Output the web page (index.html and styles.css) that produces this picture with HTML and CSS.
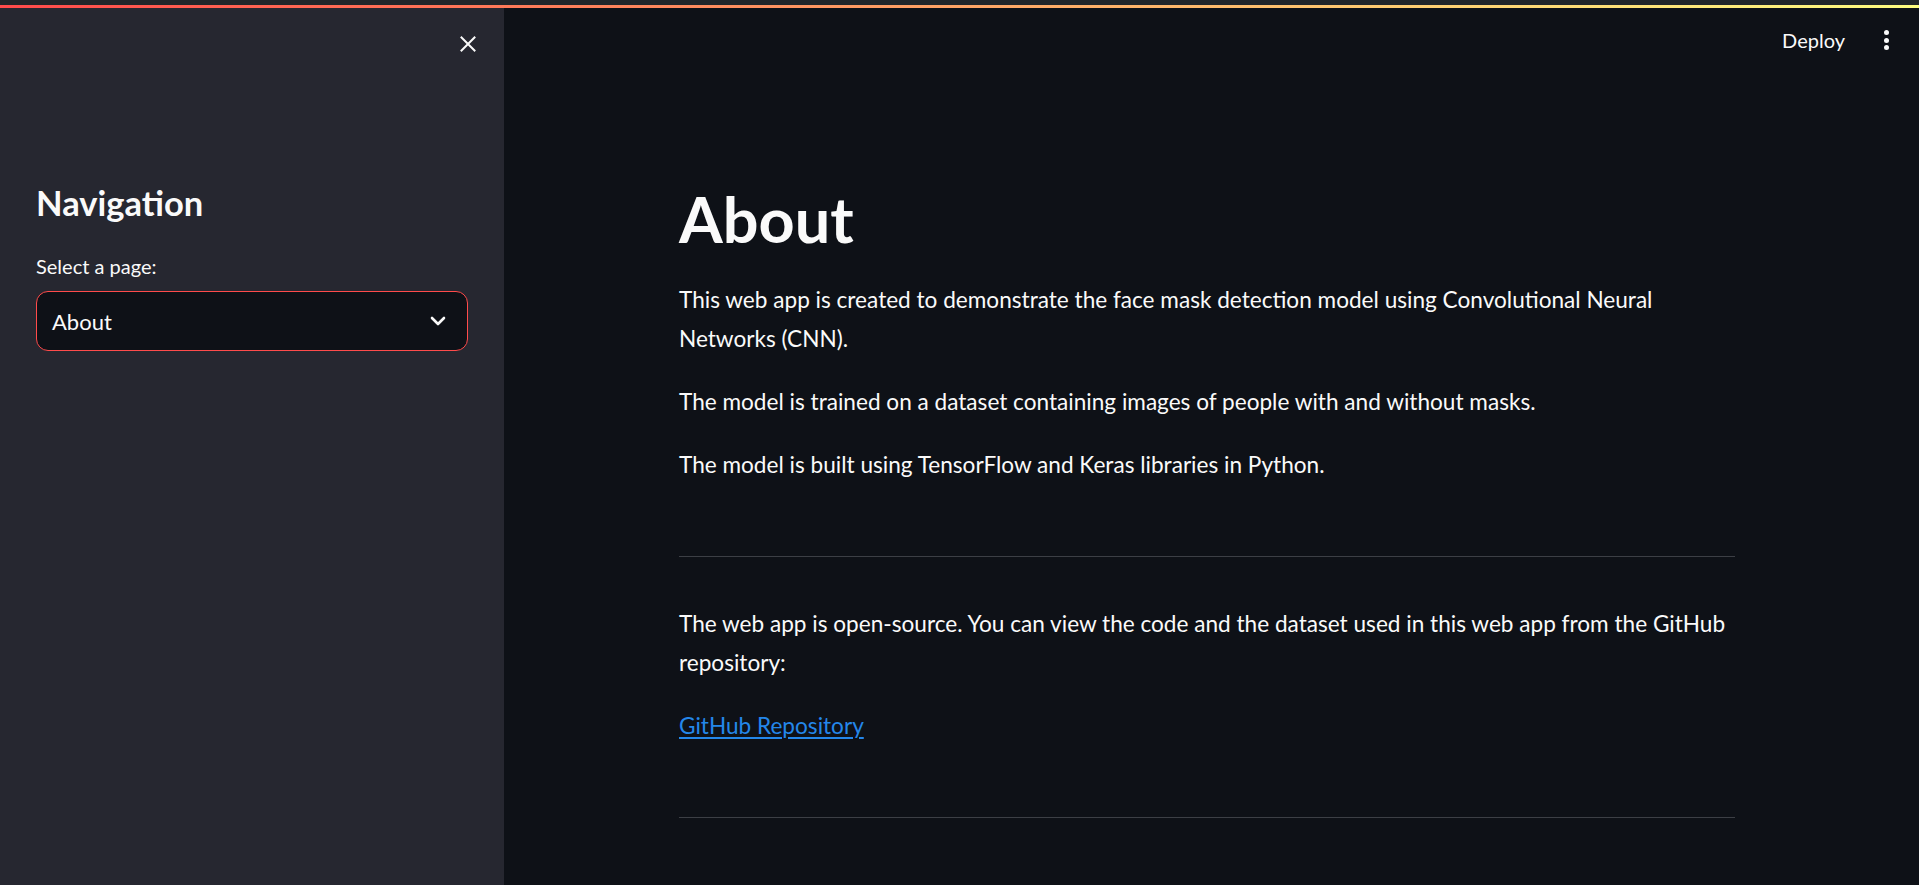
FILE: index.html
```html
<!DOCTYPE html>
<html lang="en">
<head>
<meta charset="utf-8">
<title>About</title>
<link rel="stylesheet" href="styles.css">
</head>
<body>
<div class="strip"></div>
<div class="decoration"></div>
<div class="app">
  <aside class="sidebar">
    <div class="sb-top">
      <button class="close-btn" aria-label="Close sidebar">
        <svg width="16" height="16" viewBox="0 0 16 16"><path d="M1.5 1.5 L14.5 14.5 M14.5 1.5 L1.5 14.5" stroke="#fafafa" stroke-width="2" stroke-linecap="square" fill="none"/></svg>
      </button>
    </div>
    <div class="sb-content">
      <h2 class="sb-title">Navigation</h2>
      <div class="field-label">Select a page:</div>
      <div class="select">
        <span class="select-value">About</span>
        <svg class="chevron" width="16" height="10" viewBox="0 0 16 10"><path d="M2 2 L8 8 L14 2" stroke="#fafafa" stroke-width="2.6" fill="none" stroke-linecap="round" stroke-linejoin="round"/></svg>
      </div>
    </div>
  </aside>
  <main class="main">
    <header class="header">
      <span class="deploy">Deploy</span>
      <span class="kebab" aria-label="Menu"><i></i><i></i><i></i></span>
    </header>
    <section class="content">
      <h1 class="title">About</h1>
      <p class="para">This web app is created to demonstrate the face mask detection model using Convolutional Neural Networks (CNN).</p>
      <p class="para">The model is trained on a dataset containing images of people with and without masks.</p>
      <p class="para">The model is built using TensorFlow and Keras libraries in Python.</p>
      <hr class="divider">
      <p class="para para-after-hr">The web app is open-source. You can view the code and the dataset used in this web app from the GitHub repository:</p>
      <p class="para"><a class="link" href="#">GitHub Repository</a></p>
      <hr class="divider">
    </section>
  </main>
</div>
</body>
</html>
```

FILE: styles.css
```css
* { box-sizing: border-box; }
html, body {
  margin: 0;
  padding: 0;
  height: 100%;
  overflow: hidden;
}
body {
  background: #0e1117;
  color: #fafafa;
  font-family: "Lato", "Source Sans Pro", "Liberation Sans", sans-serif;
}
.strip {
  height: 5px;
  background: #22262a;
}
.decoration {
  height: 3px;
  background: linear-gradient(90deg, #ff4b4b, #fffd80);
}
.app {
  display: flex;
  height: 877px;
}
.sidebar {
  width: 504px;
  flex: 0 0 504px;
  background: #262730;
}
.sb-top {
  height: 72px;
  display: flex;
  align-items: center;
  justify-content: flex-end;
  padding-right: 28px;
}
.close-btn {
  background: none;
  border: 0;
  padding: 0;
  width: 16px;
  height: 16px;
  display: flex;
}
.sb-content {
  padding: 103px 36px 0 36px;
}
.sb-title {
  margin: 0;
  font-size: 34.5px;
  line-height: 40px;
  font-weight: 700;
}
.field-label {
  margin-top: 28px;
  font-size: 20px;
  line-height: 30px;
}
.select {
  margin-top: 10px;
  height: 60px;
  border: 1px solid #ff4b4b;
  border-radius: 12px;
  background: #0e1117;
  display: flex;
  align-items: center;
  justify-content: space-between;
  padding: 0 21px 0 15px;
}
.select-value {
  font-size: 22px;
}
.chevron { display: block; }
.main {
  flex: 1;
  display: flex;
  flex-direction: column;
  padding-right: 9px;
}
.header {
  height: 64px;
  display: flex;
  align-items: center;
  justify-content: flex-end;
  padding-right: 18px;
}
.deploy {
  font-size: 20px;
  margin-right: 35px;
}
.kebab {
  width: 12px;
  display: flex;
  flex-direction: column;
  align-items: center;
  gap: 2.5px;
}
.kebab i {
  display: block;
  width: 5px;
  height: 5px;
  border-radius: 50%;
  background: #fafafa;
}
.content {
  width: 100%;
  max-width: 1104px;
  margin: 0 auto;
  padding: 110px 24px 0 24px;
}
.title {
  margin: 0;
  font-size: 63px;
  line-height: 73px;
  font-weight: 700;
}
.para {
  margin: 24px 0 0 0;
  font-size: 22.6px;
  line-height: 39px;
}
.title + .para { margin-top: 25px; }
.divider {
  margin: 72px 0 0 0;
  border: 0;
  height: 1px;
  background: #3c3f45;
}
.para-after-hr { margin-top: 47px; }
.link {
  color: #2487ea;
  text-decoration: underline;
  text-underline-offset: 3px;
}
```
